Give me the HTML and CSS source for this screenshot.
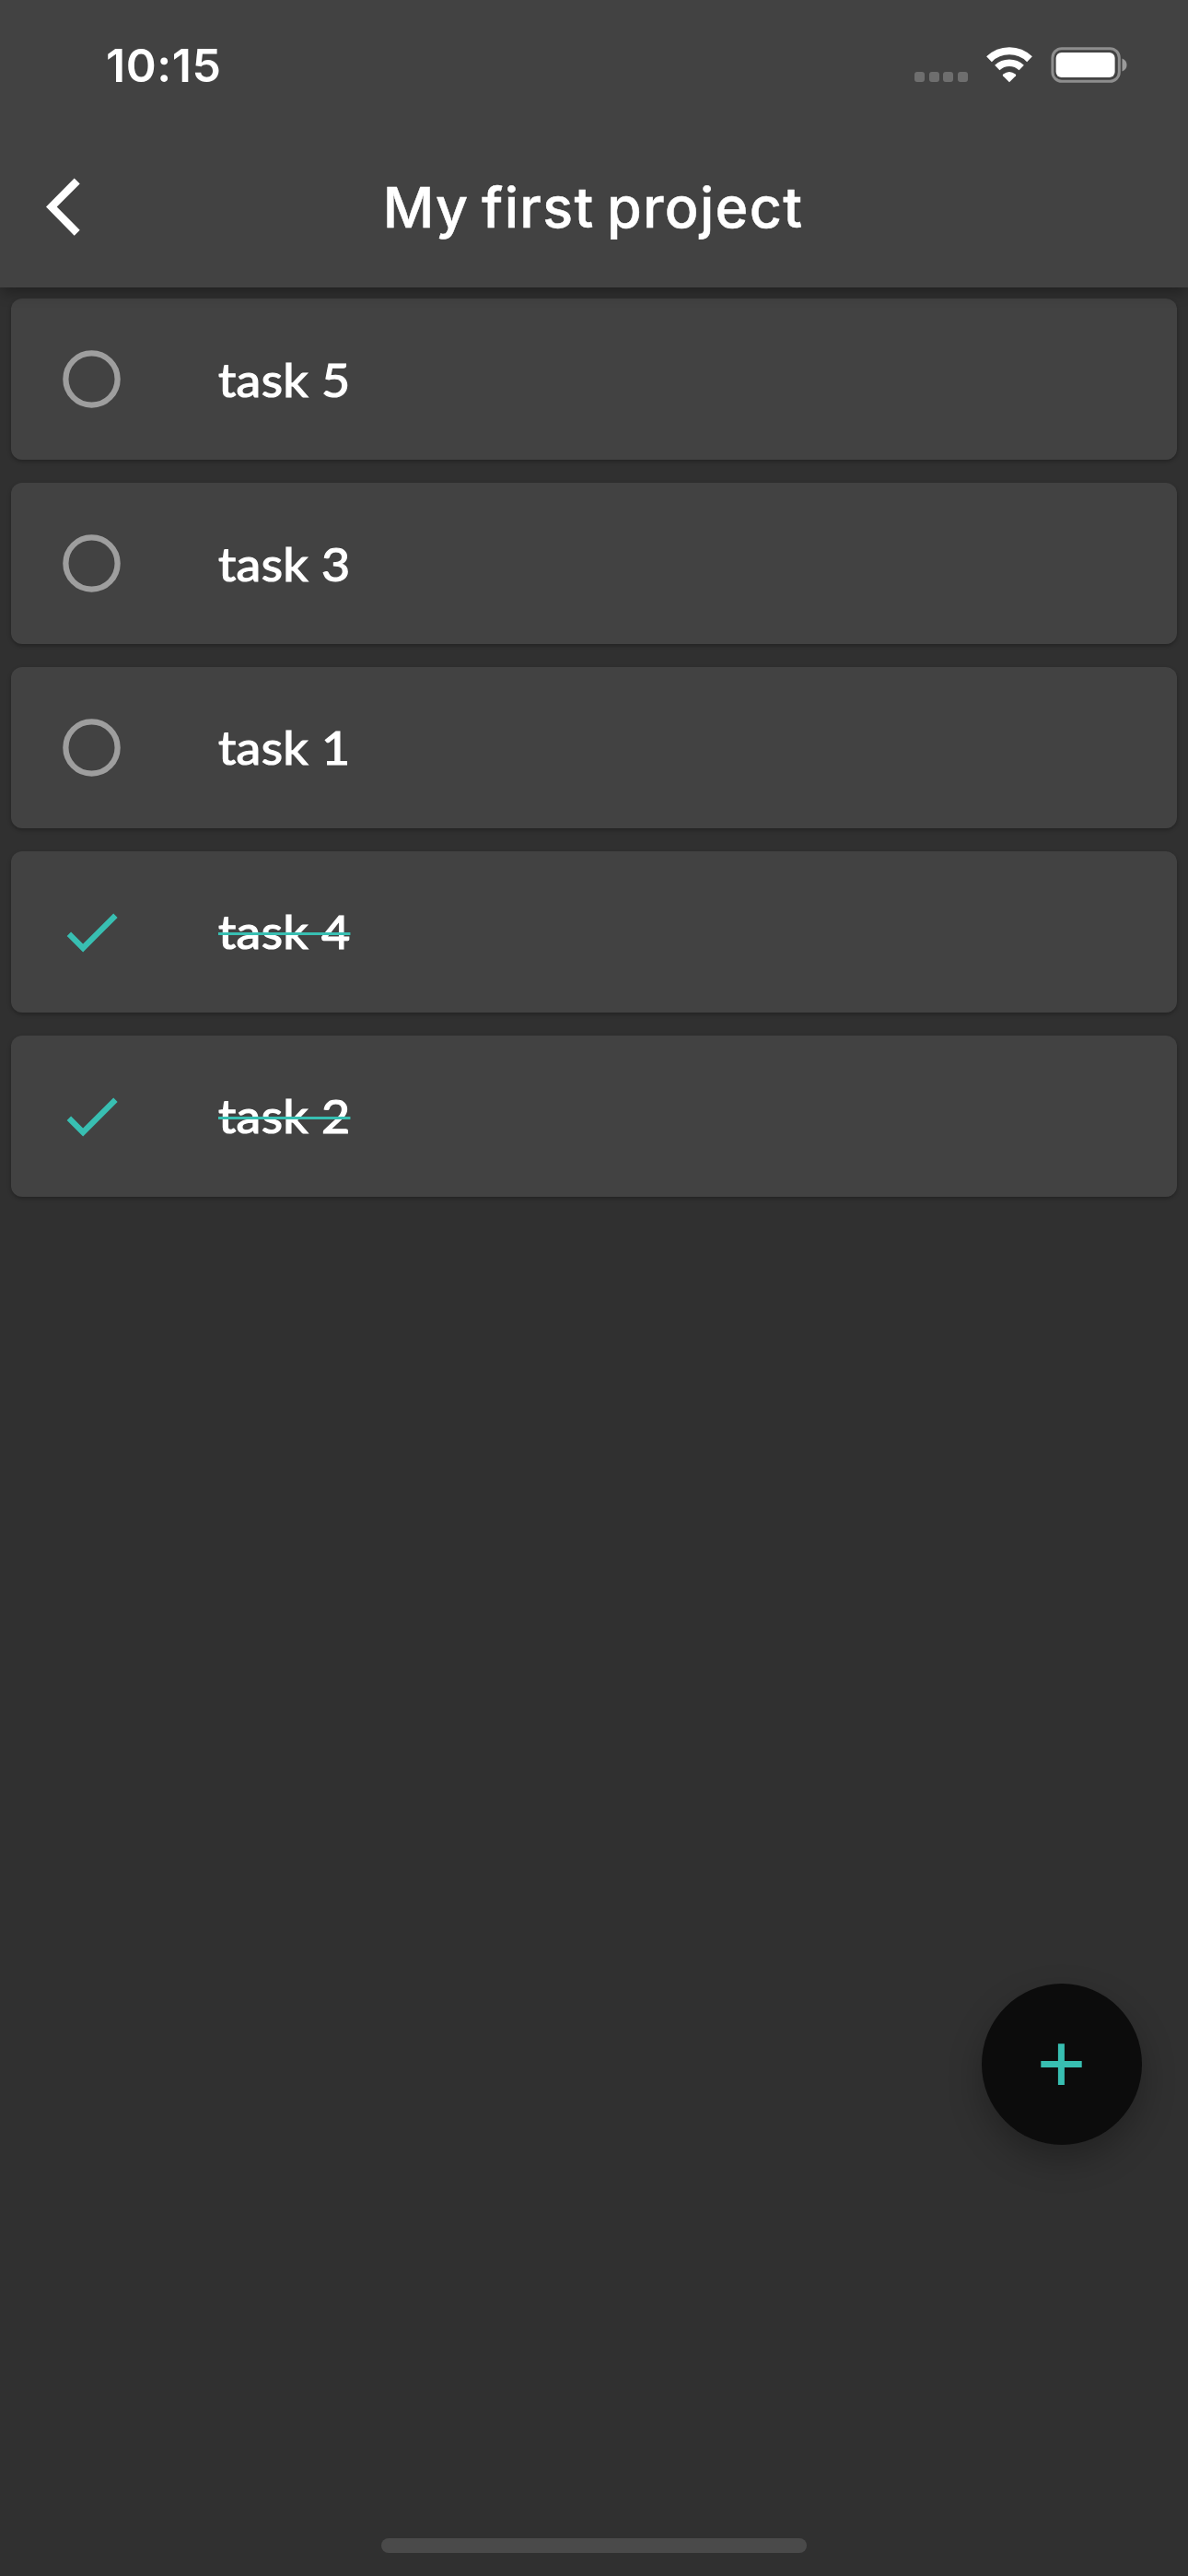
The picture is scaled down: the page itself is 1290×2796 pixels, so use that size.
FILE: index.html
```html
<!DOCTYPE html>
<html lang="en">
<head>
<meta charset="utf-8">
<title>My first project</title>
<link rel="stylesheet" href="styles.css">
</head>
<body>
<div class="screen">
  <header class="top">
    <div class="status">
      <span class="time">10:15</span>
      <div class="indicators">
        <div class="cell"><i></i><i></i><i></i><i></i></div>
        <svg class="wifi" width="50" height="39" viewBox="0 0 50 39">
          <g fill="none" stroke="#fff">
            <path d="M3 13.2A31.5 31.5 0 0 1 47 13.2" stroke-width="8.2"/>
            <path d="M11.8 22.6A19 19 0 0 1 38.2 22.6" stroke-width="7.6"/>
          </g>
          <path d="M25 38.2L18 31.2Q17.4 30.3 18.3 29.6Q25 24.4 31.7 29.6Q32.6 30.3 32 31.2Z" fill="#fff"/>
        </svg>
        <svg class="battery" width="83" height="39" viewBox="0 0 83 39">
          <rect x="1.9" y="1.7" width="72.4" height="35.6" rx="10" fill="none" stroke="#8e8e8e" stroke-width="3"/>
          <rect x="5.6" y="5.9" width="64" height="27.2" rx="6" fill="#fff"/>
          <path d="M77.5 12.4Q82.5 14.4 82.5 19.4Q82.5 24.4 77.5 26.4Z" fill="#9a9a9a"/>
        </svg>
      </div>
    </div>
    <div class="appbar">
      <svg class="back" width="38" height="64" viewBox="0 0 38 64">
        <path d="M0 31.6L30.7 0.4L36.7 6.4L11.7 31.6L36.7 56.8L30.7 62.8Z" fill="#fff"/>
      </svg>
      <h1 class="title">My first project</h1>
    </div>
  </header>
  <main class="tasks">
    <div class="task">
      <svg class="mark" viewBox="0 0 24 24"><circle cx="12" cy="12" r="9" fill="none" stroke="#9e9e9e" stroke-width="2"/></svg>
      <span class="label">task 5</span>
    </div>
    <div class="task">
      <svg class="mark" viewBox="0 0 24 24"><circle cx="12" cy="12" r="9" fill="none" stroke="#9e9e9e" stroke-width="2"/></svg>
      <span class="label">task 3</span>
    </div>
    <div class="task">
      <svg class="mark" viewBox="0 0 24 24"><circle cx="12" cy="12" r="9" fill="none" stroke="#9e9e9e" stroke-width="2"/></svg>
      <span class="label">task 1</span>
    </div>
    <div class="task">
      <svg class="mark" viewBox="0 0 24 24"><path d="M9 16.17L4.83 12l-1.42 1.41L9 19 21 7l-1.41-1.41z" fill="#38bfb2"/></svg>
      <span class="label done">task 4</span>
    </div>
    <div class="task">
      <svg class="mark" viewBox="0 0 24 24"><path d="M9 16.17L4.83 12l-1.42 1.41L9 19 21 7l-1.41-1.41z" fill="#38bfb2"/></svg>
      <span class="label done">task 2</span>
    </div>
  </main>
  <button class="fab" aria-label="Add task">
    <svg width="45" height="45" viewBox="0 0 45 45"><path d="M18.9 0.3h7v18.8h18.8v7H25.9v18.8h-7V26.1H0.3v-7h18.6z" fill="#38bfb2"/></svg>
  </button>
  <div class="home"></div>
</div>
</body>
</html>
```
FILE: styles.css
```css
* { box-sizing: border-box; }
body { margin: 0; background: #303030; }
.screen {
  position: relative;
  width: 1290px;
  height: 2796px;
  overflow: hidden;
  background: #303030;
  color: #fff;
  display: flex;
  flex-direction: column;
}
.top {
  position: relative;
  z-index: 1;
  height: 312px;
  flex: none;
  background: #424242;
  box-shadow: 0 8px 14px -2px rgba(0, 0, 0, 0.3);
}
.status {
  height: 142px;
  padding: 0 66px 0 115px;
  display: flex;
  justify-content: space-between;
}
.time {
  font: 600 50px/60px Inter, sans-serif;
  padding-top: 41px;
  letter-spacing: 0.6px;
}
.indicators {
  height: 39px;
  margin-top: 51px;
  display: flex;
  align-items: flex-end;
}
.cell { display: flex; gap: 4.6px; margin-right: 20px; }
.cell i {
  width: 11px;
  height: 11px;
  margin-bottom: 1px;
  border-radius: 3px;
  background: #6e6e6e;
}
.wifi { margin-right: 20px; }
.appbar {
  height: 166px;
  padding-left: 50px;
  display: flex;
  align-items: center;
}
.title {
  flex: 1;
  margin: 0 90px 0 0;
  text-align: center;
  font: 500 61px/80px Inter, sans-serif;
  -webkit-text-stroke: 0.5px #fff;
  letter-spacing: 1.3px;
  word-spacing: -4px;
}
.tasks {
  padding: 12.4px;
  display: flex;
  flex-direction: column;
  gap: 24.8px;
}
.task {
  height: 175px;
  padding-left: 50px;
  display: flex;
  align-items: center;
  background: #424242;
  border-radius: 12px;
  box-shadow: 0 2px 4px rgba(0, 0, 0, 0.28);
}
.mark { width: 75px; height: 75px; margin-right: 100px; }
.label {
  font: 400 50px/60px Lato, sans-serif;
  -webkit-text-stroke: 1.2px #fff;
  letter-spacing: 0.3px;
  transform: scaleX(1.075);
  transform-origin: left;
}
.done { text-decoration: line-through #38bfb2 3px; }
.fab {
  position: absolute;
  left: 1066px;
  top: 2153px;
  width: 174px;
  height: 175px;
  padding: 0 1px 0 0;
  border: 0;
  border-radius: 50%;
  background: #0c0c0c;
  display: flex;
  align-items: center;
  justify-content: center;
  box-shadow: 0 16px 36px rgba(0, 0, 0, 0.28);
}
.home {
  width: 462px;
  height: 16px;
  margin: auto auto 25px;
  border-radius: 8px;
  background: #4a4a4a;
}
```
